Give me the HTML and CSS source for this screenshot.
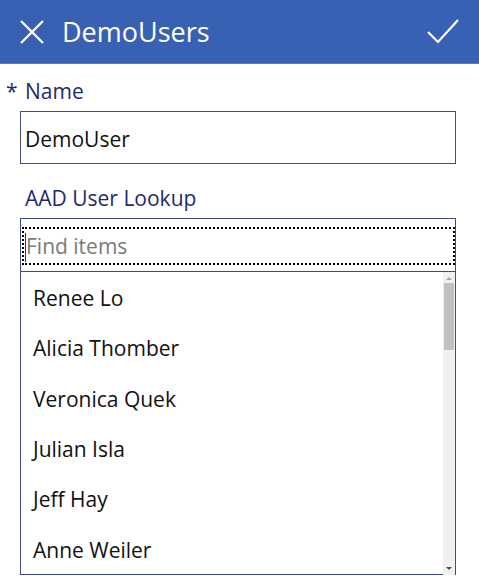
FILE: index.html
```html
<!DOCTYPE html>
<html lang="en">
<head>
<meta charset="utf-8">
<title>DemoUsers</title>
<link rel="stylesheet" href="styles.css">
</head>
<body>
<header class="topbar">
  <svg class="icon-close" width="24" height="24" viewBox="0 0 24 24"><path d="M1 1 L23 23 M23 1 L1 23" stroke="#fff" stroke-width="2.2" fill="none"/></svg>
  <h1 class="title">DemoUsers</h1>
  <svg class="icon-check" width="32" height="26" viewBox="0 0 32 26"><path d="M1 14 L11 24 L31 2" stroke="#fff" stroke-width="2.2" fill="none"/></svg>
</header>
<main class="form">
  <div class="label-row"><span class="req">*</span><span class="label">Name</span></div>
  <div class="textbox">DemoUser</div>
  <div class="label-row"><span class="req"></span><span class="label">AAD User Lookup</span></div>
  <div class="lookup">
    <div class="search-row">
      <div class="search-focus"><span class="caret"></span><span class="placeholder">Find items</span></div>
    </div>
    <div class="list-area">
      <ul class="items">
        <li class="item">Renee Lo</li>
        <li class="item">Alicia Thomber</li>
        <li class="item">Veronica Quek</li>
        <li class="item">Julian Isla</li>
        <li class="item">Jeff Hay</li>
        <li class="item">Anne Weiler</li>
      </ul>
      <div class="scrollbar">
        <span class="arrow-up"></span>
        <div class="thumb"></div>
        <div class="track-rest"></div>
        <span class="arrow-down"></span>
      </div>
    </div>
  </div>
</main>
</body>
</html>
```
FILE: styles.css
```css
html, body {
  margin: 0;
  padding: 0;
  background: #ffffff;
}
body {
  width: 479px;
  height: 584px;
  overflow: hidden;
  font-family: "Open Sans", "Noto Sans", "Liberation Sans", sans-serif;
  font-size: 21px;
  color: #111111;
}
.topbar {
  height: 63px;
  background: #3961b3;
  border-bottom: 1px solid #5a7cc2;
  display: flex;
  align-items: center;
  padding: 0 19px 0 20px;
  box-sizing: content-box;
}
.icon-close {
  flex: none;
  margin-top: 1px;
}
.title {
  margin: 0 0 0 18px;
  font-size: 27px;
  font-weight: 400;
  color: #ffffff;
  line-height: 36px;
  flex: 1;
}
.icon-check {
  flex: none;
  margin-top: -2px;
  margin-right: 1px;
}
.form {
  padding: 0 23px 0 20px;
}
.label-row {
  display: flex;
  margin-left: -14px;
  padding: 13px 0 6px;
  line-height: 28px;
  color: #1f2a6c;
}
.label-row + .textbox + .label-row {
  padding-top: 20px;
}
.req {
  width: 19px;
  flex: none;
  color: #1f2a6c;
}
.label {
  color: #1f2a6c;
}
.textbox {
  border: 1px solid #444c86;
  box-sizing: content-box;
  padding: 13px 4px 0;
  line-height: 28px;
  height: 38px;
  color: #111111;
}
.lookup {
  border: 1px solid #404a8a;
  height: 355px;
  display: flex;
  flex-direction: column;
}
.search-row {
  border-bottom: 1px solid #3e4890;
  box-sizing: border-box;
  height: 53px;
  padding: 8px 0 6px 1px;
}
.search-focus {
  border: 2px dotted #000000;
  display: flex;
  align-items: flex-start;
  padding-top: 3px;
  box-sizing: content-box;
  height: 31px;
}
.caret {
  width: 1px;
  height: 29px;
  background: #333333;
  margin: 1px 0 0 1px;
  flex: none;
}
.placeholder {
  color: #7a7a7a;
  line-height: 28px;
}
.list-area {
  flex: 1;
  display: flex;
}
.items {
  list-style: none;
  margin: 0;
  padding: 1px 0 0;
  flex: 1;
}
.item {
  height: 50.3px;
  display: flex;
  align-items: center;
  padding-left: 12px;
  line-height: 28px;
  color: #111111;
}
.scrollbar {
  width: 12px;
  background: #f0f0f0;
  display: flex;
  flex-direction: column;
  align-items: center;
}
.arrow-up {
  margin-top: 5px;
  width: 0;
  height: 0;
  border-left: 3px solid transparent;
  border-right: 3px solid transparent;
  border-bottom: 3px solid #a3a3a3;
}
.thumb {
  margin-top: 3px;
  width: 10px;
  height: 67px;
  background: #c1c1c1;
}
.track-rest {
  flex: 1;
}
.arrow-down {
  margin-bottom: 5px;
  width: 0;
  height: 0;
  border-left: 3px solid transparent;
  border-right: 3px solid transparent;
  border-top: 3px solid #505050;
}
```
